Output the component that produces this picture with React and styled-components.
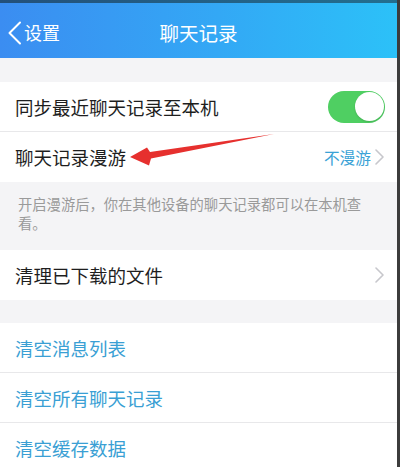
import React from "react";
import styled, { createGlobalStyle } from "styled-components";

const GlobalStyle = createGlobalStyle`
  html, body {
    margin: 0;
    padding: 0;
    background: #f4f4f6;
  }
  body {
    font-family: "Noto Sans CJK SC", "Noto Sans", sans-serif;
  }
`;

export default function App() {
  return (
    <Page>
      <GlobalStyle />
      <StatusStrip />
      <Header>
        <BackButton>
          <svg width="15" height="24" viewBox="0 0 15 24">
            <path d="M13 1.5 L2.5 12 L13 22.5" fill="none" stroke="#fff" strokeWidth="2" strokeLinecap="round" strokeLinejoin="round" />
          </svg>
          <span>设置</span>
        </BackButton>
        <Title>聊天记录</Title>
      </Header>

      <Gap />

      <Group>
        <Row>
          <Label>同步最近聊天记录至本机</Label>
          <Toggle>
            <Knob />
          </Toggle>
        </Row>
        <Row last>
          <Label>聊天记录漫游</Label>
          <Value>
            不漫游
            <Chevron />
          </Value>
        </Row>
      </Group>

      <Note>开启漫游后，你在其他设备的聊天记录都可以在本机查看。</Note>

      <Group>
        <Row last>
          <Label>清理已下载的文件</Label>
          <Chevron />
        </Row>
      </Group>

      <Gap small />

      <Group>
        <Row>
          <Label blue>清空消息列表</Label>
        </Row>
        <Row>
          <Label blue>清空所有聊天记录</Label>
        </Row>
        <Row last>
          <Label blue>清空缓存数据</Label>
        </Row>
      </Group>

      <Arrow width="400" height="467" viewBox="0 0 400 467">
        <polygon points="130,157 147,147.5 150,152 274,134 151,158.5 149,165.5" fill="#e6302e" />
      </Arrow>
    </Page>
  );
}

function Chevron() {
  return (
    <ChevronIcon width="9" height="16" viewBox="0 0 9 16">
      <path d="M1 1 L8 8 L1 15" fill="none" stroke="#c7c7cc" strokeWidth="1.6" strokeLinecap="round" strokeLinejoin="round" />
    </ChevronIcon>
  );
}

const Page = styled.div`
  position: relative;
  width: 400px;
  height: 467px;
  overflow: hidden;
  box-sizing: border-box;
  border-right: 3px solid #3c3c3c;
  background: #f4f4f6;
`;

const StatusStrip = styled.div`
  height: 3px;
  background: linear-gradient(90deg, #23507a, #236f90);
`;

const Header = styled.header`
  position: relative;
  height: 55px;
  padding-top: 3px;
  box-sizing: border-box;
  display: flex;
  align-items: center;
  justify-content: center;
  background: linear-gradient(90deg, #3b8df1 0%, #33a8f5 55%, #2cc1f8 100%);
  color: #fff;
`;

const BackButton = styled.div`
  position: absolute;
  left: 7px;
  top: 3px;
  bottom: 0;
  display: flex;
  align-items: center;
  gap: 2px;
  font-size: 18px;

  svg {
    margin-top: 1px;
  }
`;

const Title = styled.h1`
  margin: 0;
  font-size: 19.5px;
  font-weight: 400;
`;

const Gap = styled.div`
  height: ${(p) => (p.small ? "23px" : "24px")};
`;

const Group = styled.section`
  background: #fff;
`;

const Row = styled.div`
  height: 50px;
  box-sizing: border-box;
  display: flex;
  align-items: center;
  justify-content: space-between;
  padding: 0 13px 0 15px;
  border-bottom: ${(p) => (p.last ? "none" : "1px solid #e8e8ea")};
`;

const Label = styled.span`
  font-size: 18.5px;
  color: ${(p) => (p.blue ? "#3a9fd4" : "#1e1e1e")};
`;

const Value = styled.span`
  display: flex;
  align-items: center;
  gap: 4px;
  font-size: 15.7px;
  color: #3aa2d6;
`;

const ChevronIcon = styled.svg`
  display: block;
`;

const Toggle = styled.div`
  width: 57px;
  height: 32px;
  border-radius: 16px;
  background: #4fcf62;
  display: flex;
  align-items: center;
  justify-content: flex-end;
  padding: 1.5px;
  box-sizing: border-box;
  margin-right: -1px;
`;

const Knob = styled.div`
  width: 29px;
  height: 29px;
  border-radius: 50%;
  background: #fff;
  box-shadow: 0 1px 2px rgba(0, 0, 0, 0.15);
`;

const Note = styled.p`
  margin: 0;
  height: 68px;
  box-sizing: border-box;
  padding: 12px 30px 0 18px;
  font-size: 14.3px;
  line-height: 19px;
  color: #9a9a9a;
`;

const Arrow = styled.svg`
  position: absolute;
  left: 0;
  top: 0;
  pointer-events: none;
`;
